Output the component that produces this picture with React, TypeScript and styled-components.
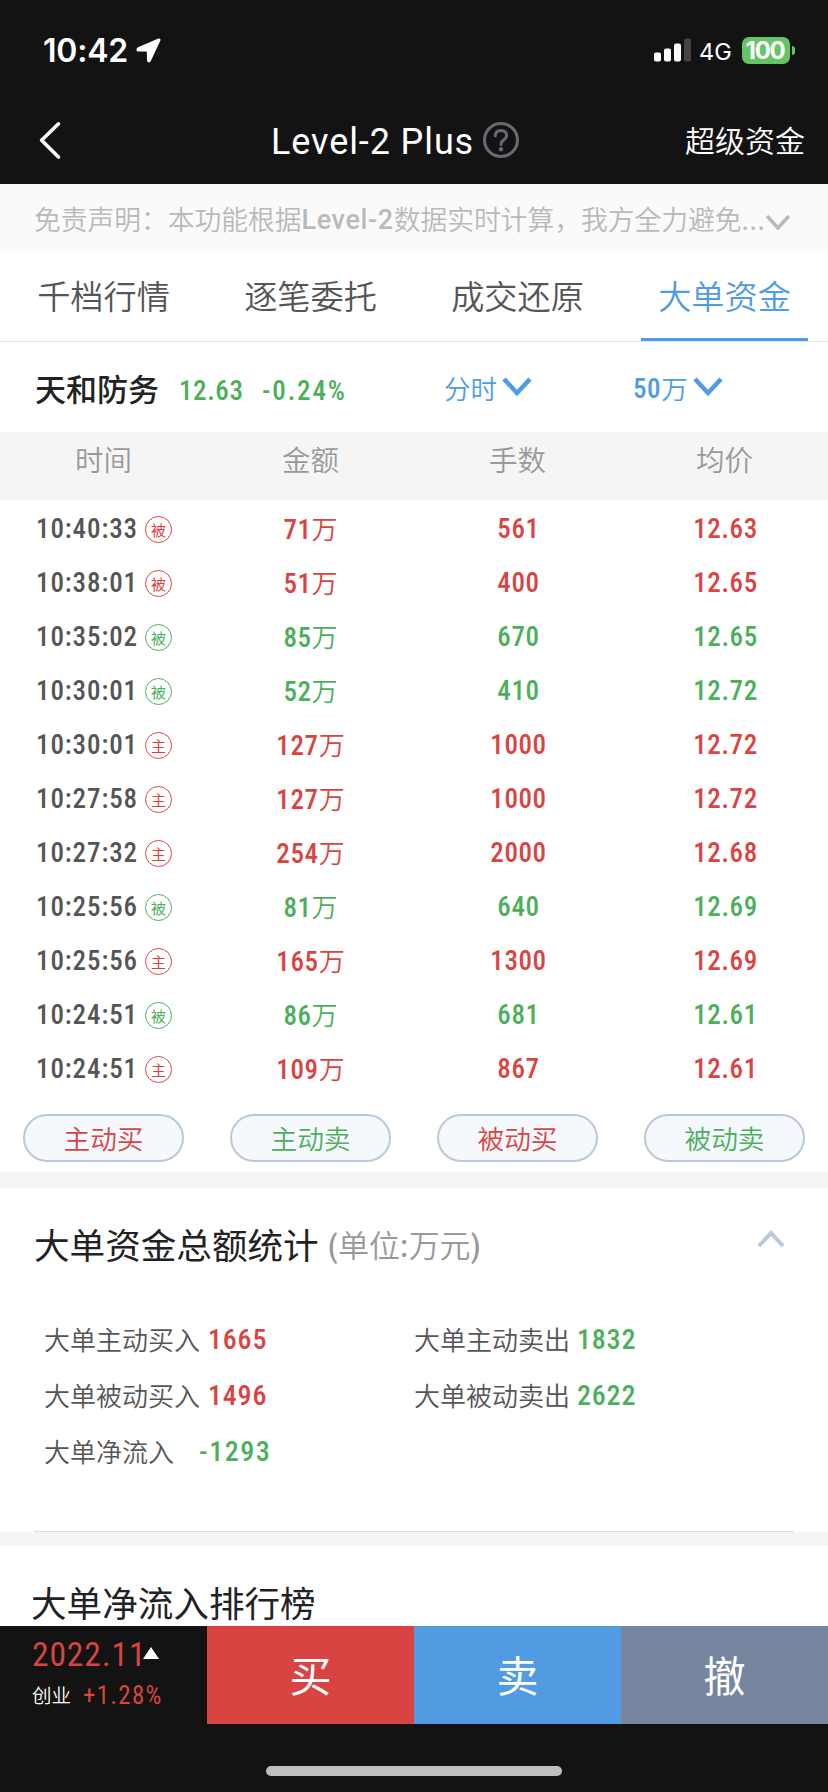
import React from 'react';
import styled, { createGlobalStyle } from 'styled-components';

const RED = '#d94442';
const GREEN = '#4caf5c';
const BLUE = '#509ce4';
const CJK = `'Noto Sans CJK SC', sans-serif`;

const GlobalStyle = createGlobalStyle`
  * { box-sizing: border-box; }
  body {
    margin: 0;
    background: #fff;
    color: #555;
    font-family: ${CJK};
    font-weight: 350;
    -webkit-font-smoothing: antialiased;
  }
  button { border: 0; padding: 0; background: none; font: inherit; color: inherit; }
`;

const Screen = styled.div`
  width: 828px;
  height: 1792px;
  display: flex;
  flex-direction: column;
  overflow: hidden;
  background: #fff;
  white-space: nowrap;
`;

const Num = styled.span<{ $size: number; $weight?: number; $ls?: number; $stretch?: number; $lh?: number }>`
  font-family: Roboto, ${CJK};
  font-stretch: ${(p) => p.$stretch ?? 85}%;
  font-size: ${(p) => p.$size}px;
  font-weight: ${(p) => p.$weight ?? 500};
  letter-spacing: ${(p) => p.$ls ?? 0.6}px;
  line-height: ${(p) => (p.$lh ? `${p.$lh}px` : 'inherit')};
`;

/* status bar and navigation */
const TopBar = styled.header`
  flex: none;
  height: 184px;
  background: #131313;
  color: #fff;
`;
const StatusBar = styled.div`
  height: 98px;
  padding: 2px 33px 0 43px;
  display: flex;
  align-items: center;
  font-family: Inter, sans-serif;
`;
const Clock = styled.span`
  font-size: 32px;
  font-weight: 600;
  letter-spacing: -0.2px;
  margin-right: 8px;
`;
const Cellular = styled.svg`
  margin-left: auto;
`;
const Network = styled.span`
  width: 32px;
  margin: 2px 11px 0 8px;
  font-size: 23.5px;
  font-weight: 400;
`;
const Battery = styled.span`
  width: 48px;
  height: 27px;
  border-radius: 7px;
  background: #65c466;
  font-size: 24px;
  font-weight: 700;
  line-height: 27px;
  text-align: center;
  letter-spacing: -1.3px;
  padding-right: 2px;
`;
const BatteryTip = styled.span`
  width: 3px;
  height: 9px;
  margin-left: 2px;
  border-radius: 0 4px 4px 0;
  background: #65c466;
`;
const NavBar = styled.nav`
  height: 86px;
  display: grid;
  grid-template-columns: 271px 1fr 143px;
`;
const BackButton = styled.button`
  display: flex;
  padding: 22px 0 0 37px;
`;
const Title = styled.h1`
  margin: 0;
  display: flex;
  justify-content: space-between;
  width: 248px;
  font-weight: 400;
  line-height: 88px;
  svg { margin-top: 24px; }
`;
const NavLink = styled.a`
  font-size: 30px;
  line-height: 83px;
`;

const Disclaimer = styled.div`
  flex: none;
  height: 68px;
  padding-left: 34px;
  display: flex;
  background: #fafafa;
  color: #b9b9b9;
  font-size: 26.75px;
  line-height: 69px;
  svg { margin: 30px 0 0 0; }
`;
const Ellipsis = styled.span`
  letter-spacing: 0.8px;
`;

/* tabs */
const Tabs = styled.div`
  flex: none;
  height: 90px;
  display: grid;
  grid-template-columns: repeat(4, 207px);
  border-bottom: 1px solid #e6e6e6;
`;
const Tab = styled.button<{ $active?: boolean }>`
  margin: 0 20px;
  font-size: 33.2px;
  line-height: 86px;
  color: ${(p) => (p.$active ? BLUE : '#555')};
  border-bottom: 3px solid ${(p) => (p.$active ? BLUE : 'transparent')};
`;

const StockRow = styled.div`
  flex: none;
  height: 90px;
  padding-left: 35px;
  display: grid;
  grid-template-columns: 144px 83px 182px 189px 1fr;
  line-height: 98px;
  color: ${GREEN};
`;
const StockName = styled.span`
  font-size: 31px;
  font-weight: 500;
  line-height: 92px;
  color: #222;
`;
const Picker = styled.button`
  display: flex;
  color: ${BLUE};
  font-size: 26.5px;
  line-height: 91px;
  svg { margin: 35px 0 0 5px; }
`;

/* trades */
const HeadRow = styled.div`
  flex: none;
  height: 68px;
  display: grid;
  grid-template-columns: repeat(4, 207px);
  background: #f5f5f5;
  color: #999;
  text-align: center;
  font-size: 28.5px;
  line-height: 53px;
`;
const Trades = styled.div`
  flex: none;
  height: 596px;
  padding-top: 2px;
`;
const TradeRow = styled.div<{ $color: string }>`
  height: 54px;
  display: grid;
  grid-template-columns: repeat(4, 207px);
  text-align: center;
  line-height: 55px;
  color: ${(p) => p.$color};
`;
const TimeCell = styled.div`
  display: flex;
  padding-left: 36px;
  text-align: left;
`;
const Time = styled.span`
  width: 109px;
  color: #555;
`;
const Mark = styled.span`
  width: 27px;
  height: 27px;
  margin-top: 14px;
  border: 1px solid currentColor;
  border-radius: 50%;
  font-size: 15px;
  font-weight: 400;
  line-height: 26px;
  text-align: center;
`;
const Amount = styled.div`
  line-height: 51px;
`;
const Figure = styled.div`
  padding-left: 2px;
`;
const Wan = styled.span`
  font-size: 26px;
`;
const Filters = styled.div`
  flex: none;
  height: 76px;
  padding-top: 18px;
  display: grid;
  grid-template-columns: repeat(4, 207px);
`;
const Filter = styled.button<{ $color: string }>`
  height: 48px;
  margin: 0 23px;
  border: 2px solid #bbc8d9;
  border-radius: 24px;
  background: #f5f8fd;
  color: ${(p) => p.$color};
  font-size: 26.7px;
  line-height: 44px;
`;

const Band = styled.div<{ $h: number }>`
  flex: none;
  height: ${(p) => p.$h}px;
  background: #f5f5f5;
`;

/* totals */
const Totals = styled.section`
  flex: none;
  height: 344px;
  padding: 0 34px;
`;
const SectionHead = styled.div`
  height: 124px;
  display: flex;
  line-height: 112px;
  svg { margin: 42px 9px 0 auto; }
`;
const SectionTitle = styled.h2`
  margin: 0;
  font-size: 35.6px;
  font-weight: 400;
  color: #222;
`;
const Unit = styled.span`
  margin-left: 9px;
  font-size: 31px;
  color: #999;
`;
const StatGrid = styled.div`
  height: 220px;
  padding-left: 10px;
  display: grid;
  grid-template-columns: 370px 1fr;
  grid-auto-rows: 56px;
  font-size: 26px;
  line-height: 56px;
  border-bottom: 1px solid #dcdcdc;
`;
const Stat = styled.div`
  display: flex;
`;
const StatLabel = styled.span<{ $w: number }>`
  width: ${(p) => p.$w}px;
  line-height: 54px;
`;
const StatValue = styled(Num)<{ $color: string }>`
  color: ${(p) => p.$color};
`;

const Ranking = styled.section`
  flex: none;
  height: 80px;
  padding: 32px 0 0 31px;
  line-height: 48px;
`;

/* bottom bar */
const BottomBar = styled.footer`
  flex: 1;
  background: #131313;
  color: #fff;
`;
const TradeBar = styled.div`
  height: 98px;
  display: grid;
  grid-template-columns: repeat(4, 207px);
`;
const IndexCell = styled.div`
  padding: 11px 0 0 32px;
`;
const IndexValue = styled.div`
  height: 40px;
  display: flex;
  line-height: 36px;
  color: ${RED};
  svg { margin: 10px 0 0 -1px; }
`;
const IndexFigure = styled.span`
  width: 112px;
`;
const IndexChange = styled.div`
  display: flex;
  line-height: 36px;
  color: ${RED};
`;
const IndexName = styled.span`
  width: 51px;
  font-size: 19.5px;
  color: #fff;
`;
const Action = styled.button<{ $bg: string }>`
  background: ${(p) => p.$bg};
  font-size: 42px;
  font-weight: 400;
  line-height: 96px;
  padding-bottom: 2px;
`;
const HomeIndicator = styled.div`
  width: 296px;
  height: 10px;
  margin: 42px auto 0;
  border-radius: 5px;
  background: #bfbfbf;
`;

const Chevron = ({ w, h, stroke, sw, up }: { w: number; h: number; stroke: string; sw: number; up?: boolean }) => (
  <svg width={w} height={h} viewBox={`0 0 ${w} ${h}`} fill="none" stroke={stroke} strokeWidth={sw}>
    <path d={up ? `M2 ${h - 2} L${w / 2} 3 L${w - 2} ${h - 2}` : `M2 2 L${w / 2} ${h - 4} L${w - 2} 2`} />
  </svg>
);

const trades: [string, string, string, string, string, string][] = [
  ['10:40:33', '被', '71', '561', '12.63', RED],
  ['10:38:01', '被', '51', '400', '12.65', RED],
  ['10:35:02', '被', '85', '670', '12.65', GREEN],
  ['10:30:01', '被', '52', '410', '12.72', GREEN],
  ['10:30:01', '主', '127', '1000', '12.72', RED],
  ['10:27:58', '主', '127', '1000', '12.72', RED],
  ['10:27:32', '主', '254', '2000', '12.68', RED],
  ['10:25:56', '被', '81', '640', '12.69', GREEN],
  ['10:25:56', '主', '165', '1300', '12.69', RED],
  ['10:24:51', '被', '86', '681', '12.61', GREEN],
  ['10:24:51', '主', '109', '867', '12.61', RED],
];

const stats: [string, string, string, number][] = [
  ['大单主动买入', '1665', RED, 164],
  ['大单主动卖出', '1832', GREEN, 163],
  ['大单被动买入', '1496', RED, 164],
  ['大单被动卖出', '2622', GREEN, 163],
  ['大单净流入', '-1293', GREEN, 155],
];

export default function App() {
  return (
    <Screen>
      <GlobalStyle />
      <TopBar>
        <StatusBar>
          <Clock>10:42</Clock>
          <svg width="25" height="25" viewBox="0 0 25 25" fill="#fff">
            <path d="M22.4 0.4 L1.4 9.6 Q-0.8 12.8 2 13.4 L10.8 13.6 L11 22.5 Q11.8 26 14.6 23.6 L24.4 2.6 Q25 0.2 22.4 0.4 Z" />
          </svg>
          <Cellular width="37" height="24" viewBox="0 0 37 24" fill="#fff">
            <rect x="0" y="14.5" width="7" height="9" rx="2" />
            <rect x="10" y="10.5" width="7" height="13" rx="2" />
            <rect x="20" y="5.5" width="7" height="18" rx="2" />
            <rect x="30" y="0.5" width="7" height="23" rx="2" fill="#444" />
          </Cellular>
          <Network>4G</Network>
          <Battery>100</Battery>
          <BatteryTip />
        </StatusBar>
        <NavBar>
          <BackButton>
            <svg width="26" height="40" viewBox="0 0 26 40" fill="none" stroke="#fff" strokeWidth="3.6" strokeLinecap="round" strokeLinejoin="round">
              <path d="M21.5 3.8 L4.6 20.3 L21.5 37" />
            </svg>
          </BackButton>
          <Title>
            <Num $size={36} $weight={400} $ls={0.9} $stretch={100}>Level-2 Plus</Num>
            <svg width="36" height="36" viewBox="0 0 36 36" fill="none" stroke="#666b73" strokeWidth="3">
              <circle cx="18" cy="18" r="16.5" />
              <path d="M12.3 13.8 Q12.5 8.6 18 8.6 Q23.6 8.8 23.6 13.4 Q23.6 15.8 20.5 18 Q18 19.8 18 22.6" strokeLinecap="round" />
              <circle cx="18" cy="27.2" r="2.2" fill="#666b73" stroke="none" />
            </svg>
          </Title>
          <NavLink>超级资金</NavLink>
        </NavBar>
      </TopBar>
      <Disclaimer>
        <span>免责声明：本功能根据</span>
        <Num $size={27} $ls={0.6} $stretch={100} $lh={72}>Level-2</Num>
        <span>数据实时计算，我方全力避免</span>
        <Ellipsis>...</Ellipsis>
        <Chevron w={26} h={18} stroke="#b9b9b9" sw={3.5} />
      </Disclaimer>
      <Tabs>
        <Tab>千档行情</Tab>
        <Tab>逐笔委托</Tab>
        <Tab>成交还原</Tab>
        <Tab $active>大单资金</Tab>
      </Tabs>
      <StockRow>
        <StockName>天和防务</StockName>
        <Num $size={27}>12.63</Num>
        <Num $size={27} $ls={1.9}>-0.24%</Num>
        <Picker>分时<Chevron w={30} h={20} stroke={BLUE} sw={4.5} /></Picker>
        <Picker><Num $size={27} $lh={94}>50</Num>万<Chevron w={30} h={20} stroke={BLUE} sw={4.5} /></Picker>
      </StockRow>
      <HeadRow>
        <span>时间</span>
        <span>金额</span>
        <span>手数</span>
        <span>均价</span>
      </HeadRow>
      <Trades>
        {trades.map(([time, mark, amount, lots, price, color], i) => (
          <TradeRow key={i} $color={color}>
            <TimeCell>
              <Time><Num $size={27} $ls={0.9}>{time}</Num></Time>
              <Mark>{mark}</Mark>
            </TimeCell>
            <Amount><Num $size={27}>{amount}</Num><Wan>万</Wan></Amount>
            <Figure><Num $size={27}>{lots}</Num></Figure>
            <Figure><Num $size={27}>{price}</Num></Figure>
          </TradeRow>
        ))}
      </Trades>
      <Filters>
        <Filter $color={RED}>主动买</Filter>
        <Filter $color={GREEN}>主动卖</Filter>
        <Filter $color={RED}>被动买</Filter>
        <Filter $color={GREEN}>被动卖</Filter>
      </Filters>
      <Band $h={16} />
      <Totals>
        <SectionHead>
          <SectionTitle>大单资金总额统计</SectionTitle>
          <Unit><Num $size={31}>(</Num>单位<Num $size={31}>:</Num>万元<Num $size={31}>)</Num></Unit>
          <Chevron w={28} h={18} stroke="#bbc8d9" sw={4} up />
        </SectionHead>
        <StatGrid>
          {stats.map(([label, value, color, w]) => (
            <Stat key={label}>
              <StatLabel $w={w}>{label}</StatLabel>
              <StatValue $size={28} $color={color} $ls={value[0] === '-' ? 1.5 : 0.8}>{value}</StatValue>
            </Stat>
          ))}
        </StatGrid>
      </Totals>
      <Band $h={14} />
      <Ranking>
        <SectionTitle>大单净流入排行榜</SectionTitle>
      </Ranking>
      <BottomBar>
        <TradeBar>
          <IndexCell>
            <IndexValue>
              <IndexFigure><Num $size={33.5} $weight={400} $ls={0.9}>2022.11</Num></IndexFigure>
              <svg width="16" height="12" viewBox="0 0 16 12" fill="#fff"><path d="M8 0 L16 12 H0 Z" /></svg>
            </IndexValue>
            <IndexChange>
              <IndexName>创业</IndexName>
              <Num $size={25} $weight={400} $ls={1.3} $lh={38}>+1.28%</Num>
            </IndexChange>
          </IndexCell>
          <Action $bg="#d94442">买</Action>
          <Action $bg="#519be3">卖</Action>
          <Action $bg="#75869e">撤</Action>
        </TradeBar>
        <HomeIndicator />
      </BottomBar>
    </Screen>
  );
}
